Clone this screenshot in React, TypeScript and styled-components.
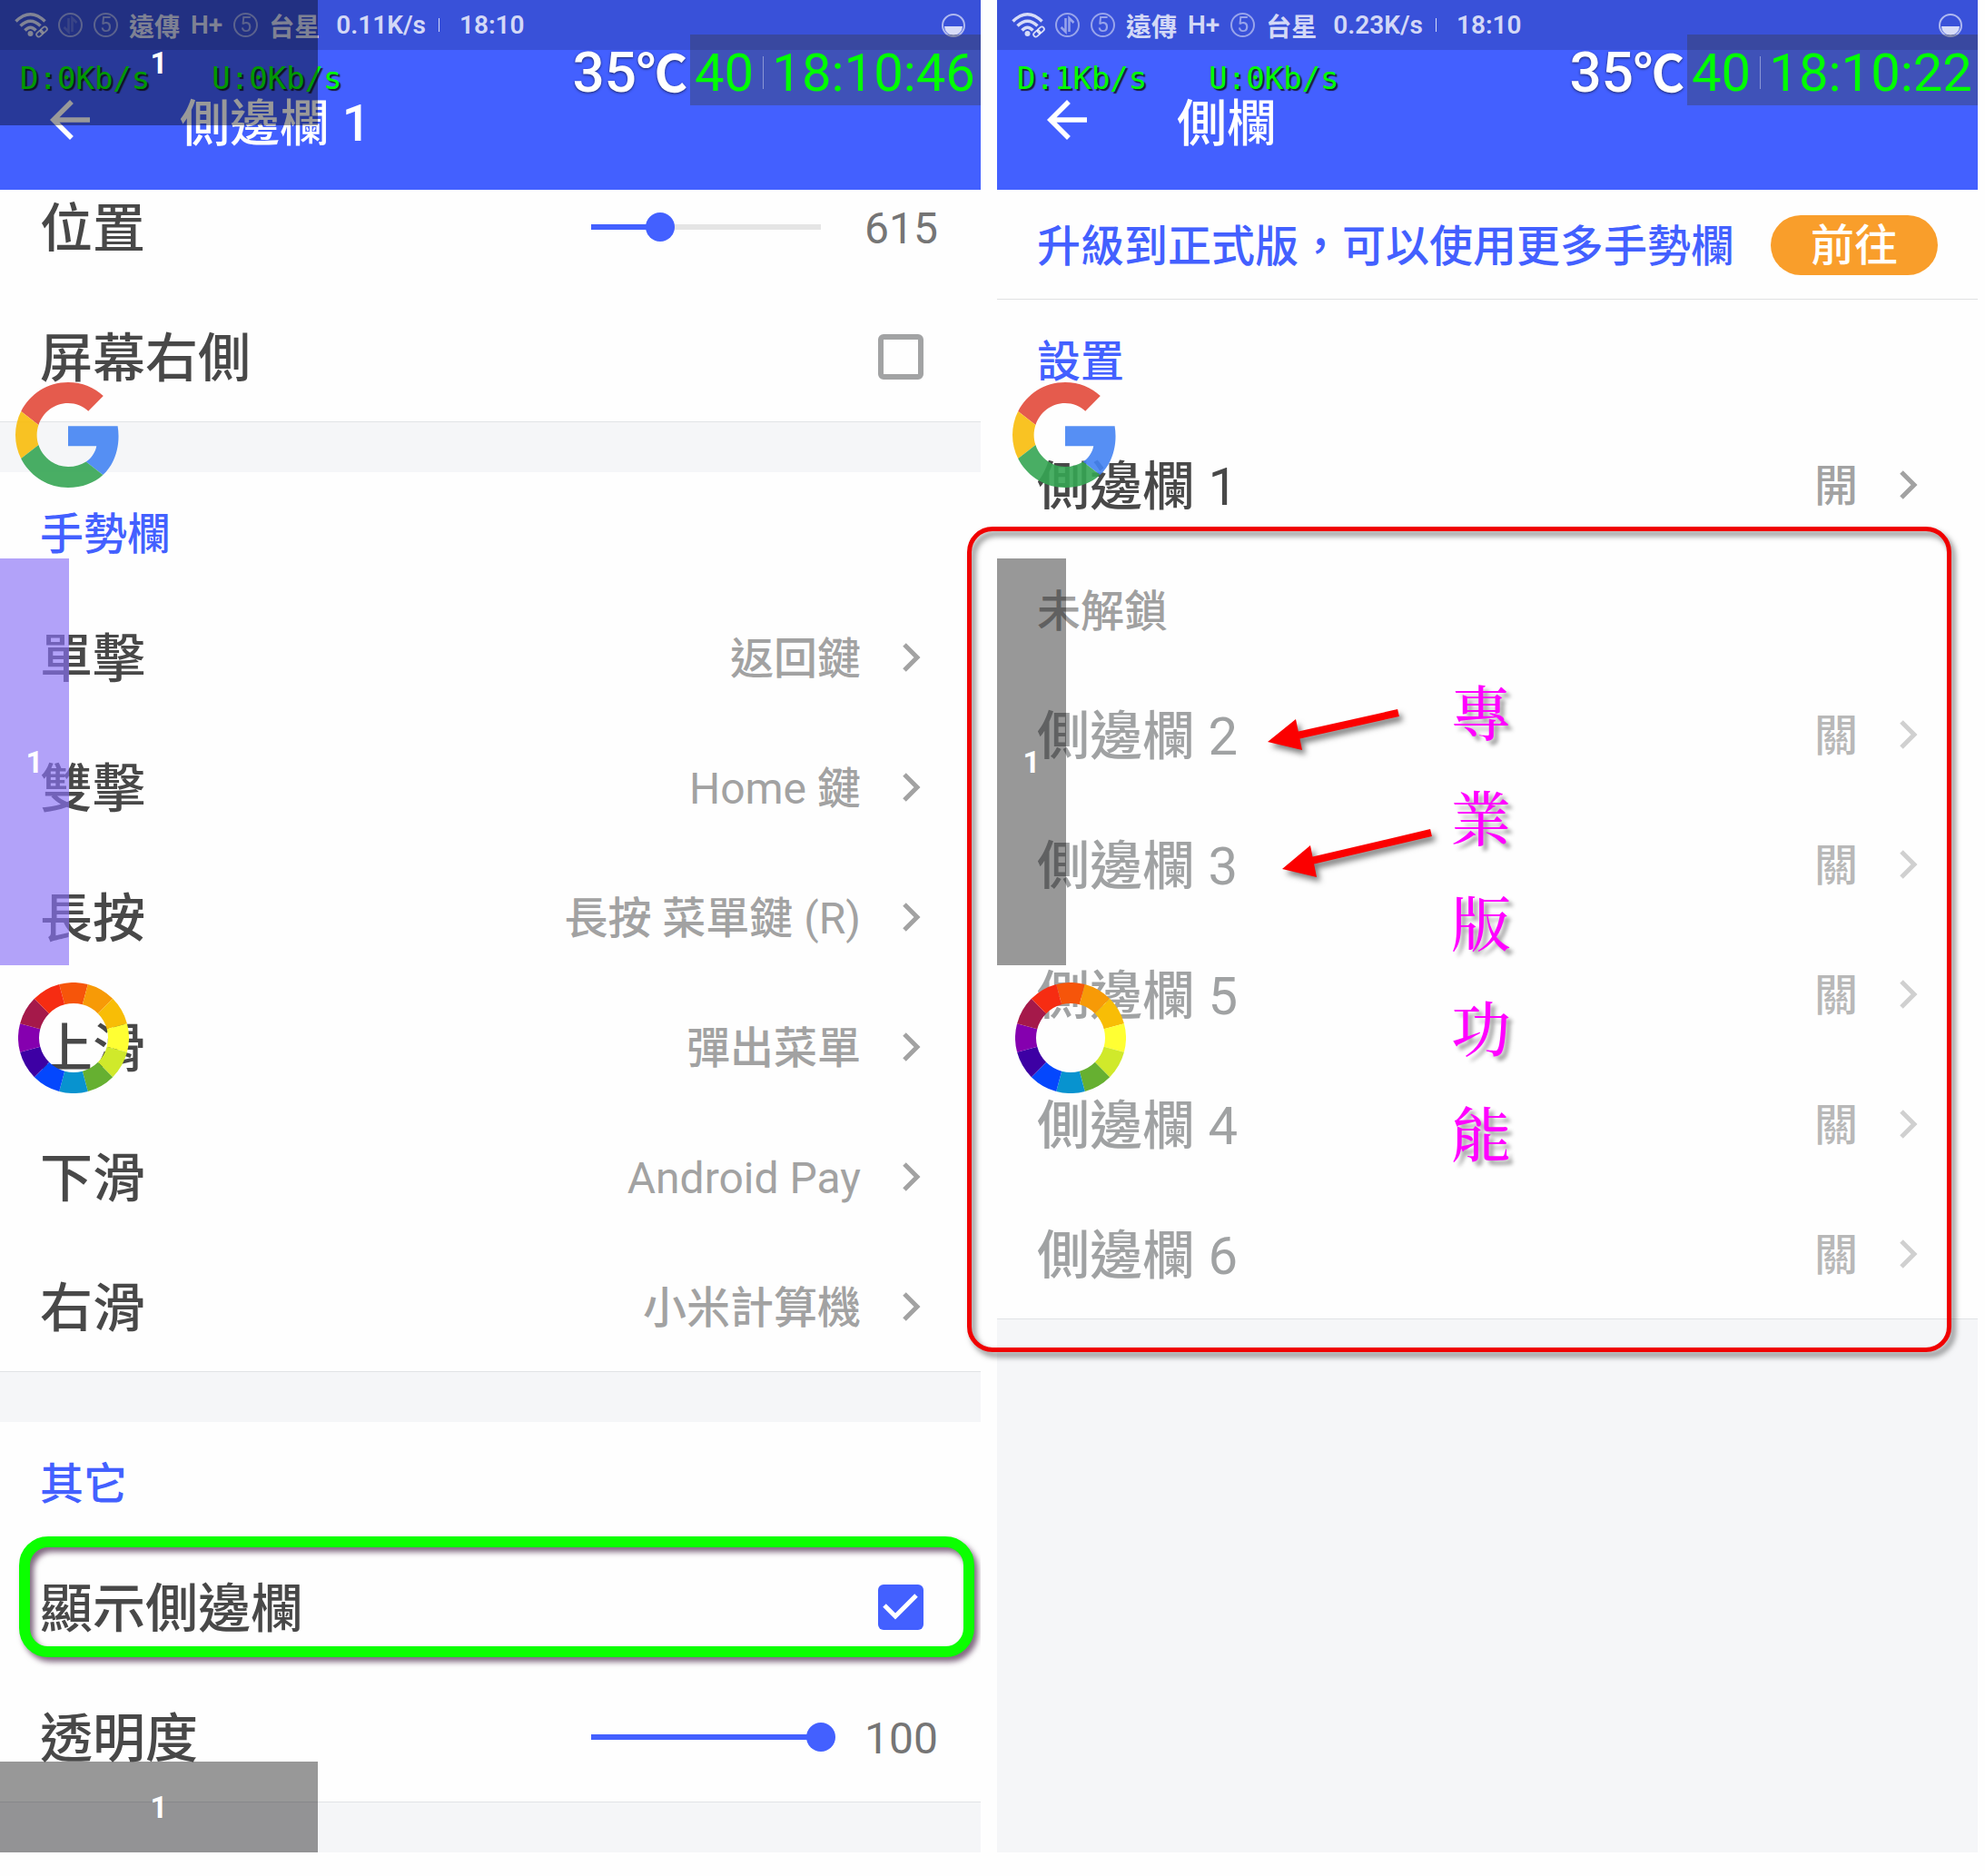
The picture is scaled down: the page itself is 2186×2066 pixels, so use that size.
import React, { useState } from 'react';
import styled, { createGlobalStyle } from 'styled-components';

const BLUE = '#4360ff';
const SANS = "Roboto, 'Noto Sans CJK TC', sans-serif";

const GlobalStyle = createGlobalStyle`
  *, *::before, *::after { box-sizing: border-box; }
  body { margin: 0; background: #fefefe; font-family: ${SANS}; }
  button, input { font: inherit; }
`;

/* ---------- page ---------- */

const Page = styled.main`
  display: grid;
  grid-template-columns: 1fr 1fr;
  align-items: stretch;
  gap: 18px;
  padding: 0 8px 26px 0;
`;

const Phone = styled.section`
  position: relative;
  display: flex;
  flex-direction: column;
  min-width: 0;
  background: #f5f6f8;
`;

/* ---------- header ---------- */

const AppHeader = styled.header`
  position: relative;
  z-index: 1;
  background: ${BLUE};
  color: #fff;
`;

const StatusBar = styled.div`
  display: flex;
  align-items: center;
  height: 55px;
  padding: 0 17px 0 16px;
  background: rgba(0, 0, 0, 0.15);
  color: rgba(255, 255, 255, 0.8);
  font-size: 28px;
  font-weight: 600;
  white-space: nowrap;
`;

const StatusGroup = styled.div`
  display: flex;
  align-items: center;
  gap: 12px;
  flex: 1;
`;

const StatusIcon = styled.svg`
  display: block;
  flex: none;
  overflow: visible;
`;

const SimBadge = styled.span`
  display: flex;
  align-items: center;
  justify-content: center;
  width: 27px;
  height: 27px;
  border: 2px solid currentColor;
  border-radius: 50%;
  font-size: 23px;
  font-weight: 400;
  line-height: 23px;
  opacity: 0.6;
`;

const Carrier = styled.span`
  font-size: 28px;
  font-weight: 700;
`;

const Speed = styled.span`
  margin-left: 6px;
`;

const Tick = styled.span`
  width: 1px;
  height: 15px;
  margin: 0 10px 0 2px;
  background: currentColor;
`;

const TitleBar = styled.div`
  display: flex;
  align-items: center;
  height: 154px;
  padding: 0 44px;
`;

const BackButton = styled.button`
  display: flex;
  width: 66px;
  margin-right: 88px;
  padding: 0;
  border: 0;
  background: none;
  color: inherit;
`;

const Title = styled.h1`
  margin: 0;
  padding-top: 8px;
  font-size: 55px;
  font-weight: 500;
  line-height: 72px;
`;

const Traffic = styled.div`
  position: absolute;
  top: 66px;
  left: 22px;
  display: flex;
  gap: 68px;
  color: #0f0;
  font-family: 'DejaVu Sans Mono', monospace;
  font-size: 34px;
  line-height: 40px;
  text-shadow: 2px 2px 1px #1c2038;
`;

const Widgets = styled.div`
  position: absolute;
  top: 38px;
  right: 0;
  display: flex;
  height: 78px;
  font-size: 58px;
  line-height: 72px;
`;

const Temperature = styled.span`
  padding: 6px 3px 0 0;
  font-size: 62px;
  font-weight: 500;
  text-shadow: 0 1px 3px #1b2560;
`;

const Degree = styled.span`
  font-size: 56px;
  font-weight: 700;
`;

const Clock = styled.div`
  display: flex;
  align-items: center;
  justify-content: space-between;
  width: 320px;
  padding: 6px 6px 0 5px;
  background: rgba(58, 58, 58, 0.36);
  color: #0f0;
`;

const ClockDivider = styled.span`
  width: 1px;
  height: 36px;
  background: rgba(255, 255, 255, 0.4);
`;

/* ---------- content ---------- */

const Viewport = styled.div`
  overflow: hidden;
`;

const Scrolled = styled.div`
  margin-top: -31px;
`;

const Group = styled.section`
  position: relative;
  background: #fefefe;
`;

const Strip = styled.div`
  height: 56px;
  border-top: 1px solid #e1e3e6;
  background: #f5f6f8;
`;

const Heading = styled.h2<{ $muted?: boolean }>`
  display: flex;
  align-items: center;
  height: 132px;
  margin: 0;
  padding: 0 44px 4px;
  color: ${(p) => (p.$muted ? '#a0a0a0' : BLUE)};
  font-size: 48px;
  font-weight: 500;
`;

const Row = styled.div<{ $end?: number }>`
  position: relative;
  display: flex;
  align-items: center;
  justify-content: space-between;
  width: 100%;
  height: 143px;
  padding: 0 ${(p) => p.$end ?? 66}px 0 44px;
  border: 0;
  background: none;
  color: #484848;
  text-align: left;
`;

const Han = styled.span`
  font-weight: 500;
`;

const RowLabel = styled.label<{ $muted?: boolean }>`
  padding-top: 5px;
  color: ${(p) => (p.$muted ? '#a0a2a3' : '#484848')};
  font-size: 58px;
  line-height: 80px;
  white-space: nowrap;
`;

const Trailing = styled.span<{ $gap: number; $muted?: boolean }>`
  display: flex;
  align-items: center;
  gap: ${(p) => p.$gap}px;
  color: ${(p) => (p.$muted ? '#b8b8b8' : '#a2a2a2')};
`;

const Value = styled.span`
  padding-top: 4px;
  font-size: 48px;
  line-height: 64px;
  white-space: nowrap;
`;

const Amount = styled.output`
  width: 82px;
  padding-top: 4px;
  color: #757575;
  font-size: 48px;
  line-height: 64px;
  text-align: right;
`;

const Range = styled.input.attrs({ type: 'range' })<{ $ratio: number }>`
  appearance: none;
  width: 285px;
  height: 32px;
  margin: 0;
  background: none;

  &::-webkit-slider-runnable-track {
    height: 6px;
    background: linear-gradient(
      to right,
      transparent 16px,
      ${BLUE} 16px,
      ${BLUE} calc(16px + (100% - 32px) * ${(p) => p.$ratio}),
      #e5e5e5 calc(16px + (100% - 32px) * ${(p) => p.$ratio}),
      #e5e5e5 calc(100% - 16px),
      transparent calc(100% - 16px)
    );
  }

  &::-webkit-slider-thumb {
    appearance: none;
    width: 32px;
    height: 32px;
    margin-top: -13px;
    border-radius: 50%;
    background: ${BLUE};
  }
`;

const Check = styled.input.attrs({ type: 'checkbox' })`
  appearance: none;
  width: 50px;
  height: 50px;
  margin: 0;
  border: 6px solid #a2a3a4;
  border-radius: 6px;

  &:checked {
    border: 0;
    background: ${BLUE}
      url("data:image/svg+xml,%3Csvg xmlns='http://www.w3.org/2000/svg' viewBox='0 0 50 50'%3E%3Cpath d='M7 23 19 35 42 12' fill='none' stroke='white' stroke-width='5'/%3E%3C/svg%3E");
  }
`;

const Banner = styled.div`
  display: flex;
  align-items: center;
  justify-content: space-between;
  height: 121px;
  padding: 2px 44px 0;
  border-bottom: 1px solid #e0e1e2;
  background: #fefefe;
`;

const BannerText = styled.p`
  margin: 0;
  padding-top: 4px;
  color: ${BLUE};
  font-size: 48px;
  font-weight: 500;
  line-height: 64px;
  white-space: nowrap;
`;

const GoButton = styled.button`
  width: 184px;
  height: 66px;
  padding: 2px 0 0;
  border: 0;
  border-radius: 33px;
  background: #f99e2b;
  color: #fff;
  font-size: 48px;
  font-weight: 500;
  line-height: 64px;
`;

/* ---------- floating overlays ---------- */

const TriggerZone = styled.div<{ $edge: 'top' | 'left' | 'bottom'; $tint?: string }>`
  position: absolute;
  z-index: 3;
  display: flex;
  align-items: center;
  justify-content: center;
  left: 0;
  ${(p) => p.$edge === 'top' && 'top: 0; width: 350px; height: 138px;'}
  ${(p) => p.$edge === 'bottom' && 'bottom: 0; width: 350px; height: 100px;'}
  ${(p) => p.$edge === 'left' && 'top: 615px; width: 76px; height: 448px;'}
  background: ${(p) => p.$tint ?? 'rgba(0, 0, 0, 0.4)'};
  color: #fff;
  font-size: 33px;
  font-weight: 700;
`;

const Floating = styled.svg<{ $top: number; $left: number; $alpha?: number }>`
  position: absolute;
  z-index: 2;
  top: ${(p) => p.$top}px;
  left: ${(p) => p.$left}px;
  opacity: ${(p) => p.$alpha ?? 1};
`;

const Highlight = styled.div<{ $tone: 'green' | 'red' }>`
  position: absolute;
  z-index: 4;
  pointer-events: none;
  ${(p) =>
    p.$tone === 'green'
      ? `inset: -6px 7px 16px 21px; border: 12px solid #0bff00; border-radius: 32px;
         filter: drop-shadow(4px 5px 3px rgba(40, 0, 40, 0.6));`
      : `inset: -25px 29px -37px -33px; border: 5px solid #f00000; border-radius: 28px;
         filter: drop-shadow(4px 5px 3px rgba(0, 0, 0, 0.5));`}
`;

const Note = styled.p`
  position: absolute;
  z-index: 4;
  top: 119px;
  left: 500px;
  width: 66px;
  margin: 0;
  color: #f0f;
  font-family: 'Noto Serif CJK TC', 'Noto Sans CJK TC', serif;
  font-size: 66px;
  font-weight: 500;
  line-height: 116px;
  overflow-wrap: anywhere;
  text-shadow: 5px 5px 4px rgba(0, 0, 0, 0.35);
`;

const Arrows = styled.svg`
  position: absolute;
  z-index: 4;
  top: 160px;
  left: 290px;
  filter: drop-shadow(4px 5px 3px rgba(0, 0, 0, 0.5));
`;

/* ---------- drawings ---------- */

const RING = [
  '#f6550a', '#f79a07', '#f8bd06', '#ffff33', '#d0e92b', '#66b031',
  '#0893cf', '#0447fd', '#3d00a4', '#8500af', '#a5194a', '#f62c12',
];

const wedge = (i: number) => {
  const at = (r: number, deg: number) => {
    const a = (deg * Math.PI) / 180;
    return `${(61 + r * Math.sin(a)).toFixed(2)} ${(61 - r * Math.cos(a)).toFixed(2)}`;
  };
  const from = i * 30 - 15;
  const to = from + 30;
  return `M${at(61, from)}A61 61 0 0 1 ${at(61, to)}L${at(38, to)}A38 38 0 0 0 ${at(38, from)}Z`;
};

const ColorRing = () => (
  <Floating $top={1082} $left={20} width="122" height="122" viewBox="0 0 122 122">
    {RING.map((c, i) => (
      <path key={c} d={wedge(i)} fill={c} />
    ))}
  </Floating>
);

const GoogleMark = () => (
  <Floating $top={421} $left={17} $alpha={0.9} width="116" height="116" viewBox="0 0 48 48">
    <path fill="#e34a3a" d="M24 9.5c3.54 0 6.710 1.220 9.210 3.600l6.850-6.850C35.900 2.380 30.470 0 24 0 14.620 0 6.510 5.380 2.560 13.220l7.980 6.190C12.430 13.720 17.740 9.500 24 9.500z" />
    <path fill="#4484f3" d="M46.980 24.550c0-1.570-.150-3.090-.380-4.550H24v9.020h12.940c-.580 2.960-2.260 5.480-4.780 7.180l7.730 6c4.510-4.180 7.090-10.360 7.090-17.650z" />
    <path fill="#f9bd0c" d="M10.530 28.590c-.480-1.450-.760-2.990-.760-4.590s.270-3.140.760-4.590l-7.980-6.190C.920 16.460 0 20.120 0 24c0 3.880.920 7.540 2.560 10.780l7.970-6.190z" />
    <path fill="#36a654" d="M24 48c6.480 0 11.930-2.130 15.890-5.810l-7.730-6c-2.150 1.450-4.920 2.300-8.160 2.300-6.260 0-11.570-4.220-13.470-9.910l-7.980 6.190C6.510 42.620 14.620 48 24 48z" />
  </Floating>
);

const WifiIcon = () => (
  <StatusIcon width="36" height="27" viewBox="0 0 36 27" fill="none" stroke="currentColor">
    <path d="M1.500 9.500Q17.500-6 33.500 9.500M6.500 14.500Q17.500 4 28.500 14.500M11.500 19.500Q17.500 13 23.500 19.500" strokeWidth="3.500" />
    <circle cx="17.500" cy="23" r="3" fill="currentColor" stroke="none" />
    <g transform="rotate(-42 30 21)" strokeWidth="1.800">
      <rect x="23" y="18.500" width="8" height="5" rx="2.500" />
      <rect x="29" y="18.500" width="8" height="5" rx="2.500" />
    </g>
  </StatusIcon>
);

const DataIcon = ({ dim }: { dim?: boolean }) => (
  <StatusIcon width="27" height="27" viewBox="0 0 27 27" fill="none" stroke="currentColor" strokeWidth="2" opacity="0.6">
    <circle cx="13.500" cy="13.500" r="12.500" />
    <path d="M11.500 6v15l-5-5M15.500 21V6l5 5" strokeWidth="2.500" opacity={dim ? 0.4 : 1} />
  </StatusIcon>
);

const BatteryIcon = () => (
  <StatusIcon width="26" height="26" viewBox="0 0 26 26">
    <circle cx="13" cy="13" r="12" fill="none" stroke="currentColor" strokeWidth="2" opacity="0.75" />
    <path d="M3 14h20a10 10 0 0 1-20 0z" fill="currentColor" />
  </StatusIcon>
);

const Chevron = ({ faint }: { faint?: boolean }) => (
  <svg width="20" height="32" viewBox="0 0 20 32" fill="none" stroke={faint ? '#d0d0d0' : '#a2a2a2'} strokeWidth="5">
    <path d="M2 2l14 14L2 30" />
  </svg>
);

/* ---------- composed parts ---------- */

/* Chinese runs are set one weight heavier than the Latin letters and digits beside them. */
const Mixed = ({ text }: { text: string }) => (
  <>
    {text
      .split(/([\u4e00-\u9fff]+)/)
      .map((part, i) => (i % 2 ? <Han key={i}>{part}</Han> : part))}
  </>
);

type HeaderProps = { title: string; speed: string; down: string; clock: string; dim?: boolean };

const Header = ({ title, speed, down, clock, dim }: HeaderProps) => (
  <AppHeader>
    <StatusBar>
      <StatusGroup>
        <WifiIcon />
        <DataIcon dim={dim} />
        <SimBadge>5</SimBadge>
        <Carrier>遠傳</Carrier>
        <span>H+</span>
        <SimBadge>5</SimBadge>
        <Carrier>台星</Carrier>
        <Speed>{speed}</Speed>
        <Tick />
        <span>18:10</span>
      </StatusGroup>
      <BatteryIcon />
    </StatusBar>
    <TitleBar>
      <BackButton aria-label="返回">
        <svg width="66" height="66" viewBox="0 0 24 24" fill="currentColor">
          <path d="M20 11H7.830l5.590-5.590L12 4l-8 8 8 8 1.410-1.410L7.830 13H20v-2z" />
        </svg>
      </BackButton>
      <Title>{title}</Title>
    </TitleBar>
    <Traffic>
      <span>{down}</span>
      <span>U:0Kb/s</span>
    </Traffic>
    <Widgets>
      <Temperature>
        35<Degree>℃</Degree>
      </Temperature>
      <Clock>
        <span>40</span>
        <ClockDivider />
        <span>{clock}</span>
      </Clock>
    </Widgets>
  </AppHeader>
);

const NavRow = ({ label, value, muted }: { label: string; value: string; muted?: boolean }) => (
  <Row as="button">
    <RowLabel as="span" $muted={muted}>
      <Mixed text={label} />
    </RowLabel>
    <Trailing $gap={46} $muted={muted}>
      <Value>
        <Mixed text={value} />
      </Value>
      <Chevron faint={muted} />
    </Trailing>
  </Row>
);

const SliderRow = ({ id, label, max, initial }: { id: string; label: string; max: number; initial: number }) => {
  const [value, setValue] = useState(initial);
  return (
    <Row $end={47}>
      <RowLabel htmlFor={id}>
        <Mixed text={label} />
      </RowLabel>
      <Trailing $gap={31}>
        <Range
          id={id}
          min={0}
          max={max}
          value={value}
          $ratio={value / max}
          onChange={(e) => setValue(Number(e.target.value))}
        />
        <Amount htmlFor={id}>{value}</Amount>
      </Trailing>
    </Row>
  );
};

const CheckRow = ({ id, label, on, children }: { id: string; label: string; on?: boolean; children?: React.ReactNode }) => (
  <Row $end={63}>
    <RowLabel htmlFor={id}>
      <Mixed text={label} />
    </RowLabel>
    <Check id={id} defaultChecked={on} />
    {children}
  </Row>
);

const GESTURES = [
  ['單擊', '返回鍵'],
  ['雙擊', 'Home 鍵'],
  ['長按', '長按 菜單鍵 (R)'],
  ['上滑', '彈出菜單'],
  ['下滑', 'Android Pay'],
  ['右滑', '小米計算機'],
];

export default function App() {
  return (
    <>
      <GlobalStyle />
      <Page>
        <Phone>
          <Header title="側邊欄 1" speed="0.11K/s" down="D:0Kb/s" clock="18:10:46" dim />
          <Viewport>
            <Scrolled>
              <Group>
                <SliderRow id="position" label="位置" max={2040} initial={615} />
                <CheckRow id="right-side" label="屏幕右側" />
              </Group>
              <Strip />
              <Group>
                <Heading>手勢欄</Heading>
                {GESTURES.map(([label, value]) => (
                  <NavRow key={label} label={label} value={value} />
                ))}
              </Group>
              <Strip />
              <Group>
                <Heading>其它</Heading>
                <CheckRow id="show-bar" label="顯示側邊欄" on>
                  <Highlight $tone="green" />
                </CheckRow>
                <SliderRow id="opacity" label="透明度" max={100} initial={100} />
              </Group>
              <Strip />
            </Scrolled>
          </Viewport>
          <GoogleMark />
          <ColorRing />
          <TriggerZone $edge="top">1</TriggerZone>
          <TriggerZone $edge="left" $tint="rgba(136, 112, 246, 0.65)">1</TriggerZone>
          <TriggerZone $edge="bottom">1</TriggerZone>
        </Phone>

        <Phone>
          <Header title="側欄" speed="0.23K/s" down="D:1Kb/s" clock="18:10:22" />
          <Banner>
            <BannerText>升級到正式版，可以使用更多手勢欄</BannerText>
            <GoButton>前往</GoButton>
          </Banner>
          <Group>
            <Heading>設置</Heading>
            <NavRow label="側邊欄 1" value="開" />
          </Group>
          <Group>
            <Heading $muted>未解鎖</Heading>
            {['2', '3', '5', '4', '6'].map((n) => (
              <NavRow key={n} label={`側邊欄 ${n}`} value="關" muted />
            ))}
            <Highlight $tone="red" />
            <Arrows width="200" height="220" viewBox="0 0 200 220" fill="#fb0000" stroke="#fb0000">
              <path d="M152 20 36 46" strokeWidth="8" />
              <path d="M8 52 39 27 46 61z" stroke="none" />
              <path d="M188 152 52 184" strokeWidth="8" />
              <path d="M24 192 55 166 62 201z" stroke="none" />
            </Arrows>
            <Note>專業版功能</Note>
          </Group>
          <Strip />
          <GoogleMark />
          <ColorRing />
          <TriggerZone $edge="left">1</TriggerZone>
        </Phone>
      </Page>
    </>
  );
}
